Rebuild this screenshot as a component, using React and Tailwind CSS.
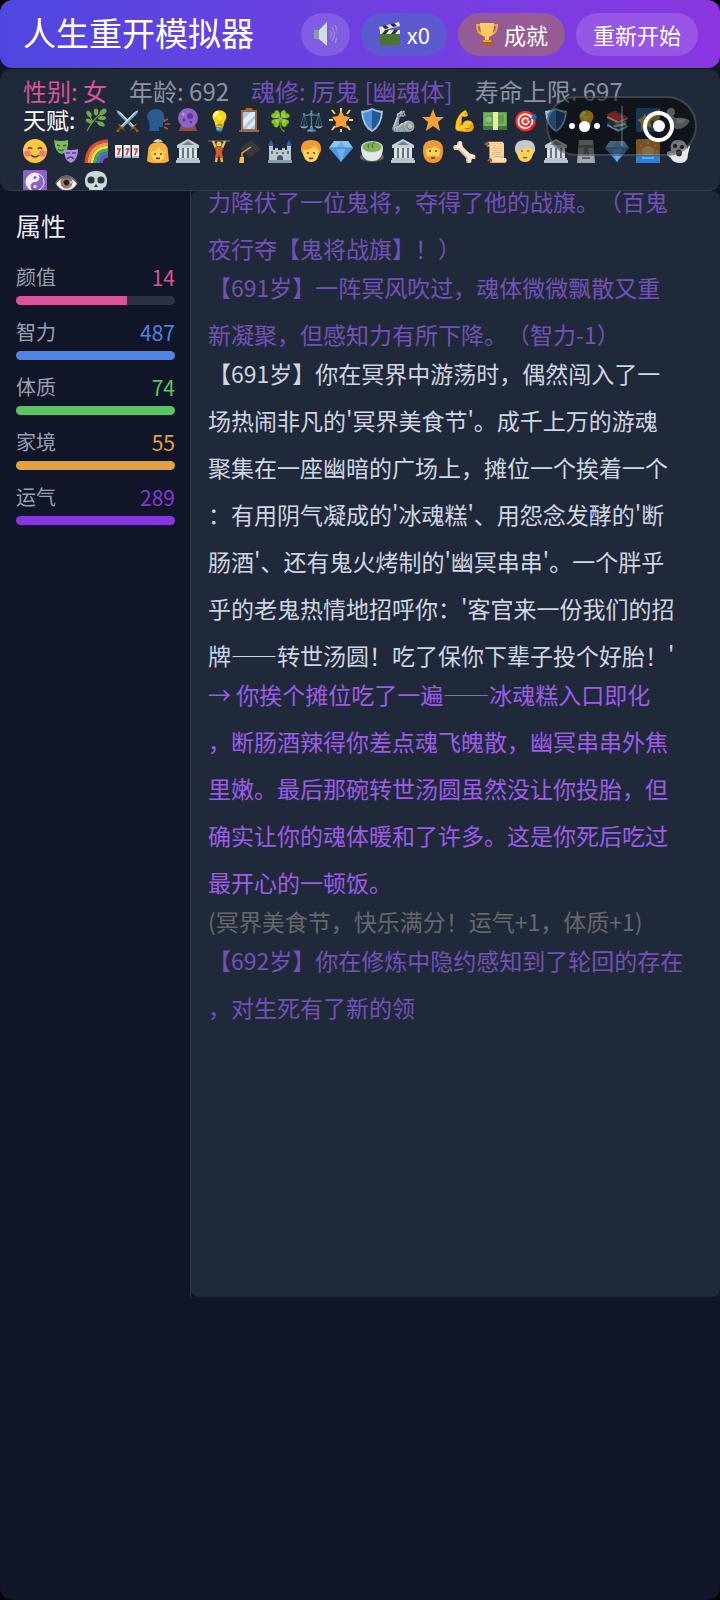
import { useState } from 'react';

// Small 24x24 drawings, used where the emoji font looks too different
const icons = {
  speaker: (
    <>
      <path d="M1 8h5v9H1z" fill="#8d9aa5" />
      <path d="M6 8l8-8v24l-8-7z" fill="#d3dce2" />
      <path d="M17 8q3 4 0 8M19 5q5 7 0 14M22 3q5 9 0 18" fill="none" stroke="#9b93c8" strokeWidth="1.2" />
    </>
  ),
  clapper: (
    <>
      <rect x="2" y="12" width="20" height="11" rx="1.5" fill="#4c7432" />
      <path d="M2 8h20v4H2z" fill="#e4e8ea" />
      <path d="M1 5l20-5 1 4L2 9z" fill="#e4e8ea" />
      <path d="M4 4l3 3 4-1-3-3zM12 2l3 3 4-1-3-3zM4 12l3-4h4l-3 4zM13 12l3-4h4l-3 4z" fill="#263238" />
    </>
  ),
  trophy: (
    <>
      <path d="M6 3H2q0 9 7 10M18 3h4q0 9-7 10" fill="none" stroke="#f5a93c" strokeWidth="2" />
      <path d="M5 1h14q0 13-5 14v5h-4v-5Q5 14 5 1z" fill="#fccb5c" />
      <path d="M6 20h12v3H6z" fill="#a9622f" />
      <path d="M8 18h8v2H8z" fill="#f09a35" />
    </>
  ),
  herb: (
    <>
      <path d="M3 23Q9 11 19 4M9 14Q6 10 6 6M11 13q5 2 8 1" fill="none" stroke="#6a9a45" strokeWidth="1.3" />
      <g fill="#6fa84c">
        <ellipse cx="19" cy="4" rx="4" ry="2.5" transform="rotate(-40 19 4)" />
        <ellipse cx="12" cy="4" rx="2.2" ry="3.4" />
        <ellipse cx="5" cy="6" rx="2.2" ry="3.4" transform="rotate(-30 5 6)" />
        <ellipse cx="5" cy="13" rx="2" ry="3.5" transform="rotate(-60 5 13)" />
        <ellipse cx="18" cy="10" rx="4" ry="2.1" />
        <ellipse cx="17" cy="16" rx="4" ry="2" transform="rotate(25 17 16)" />
      </g>
    </>
  ),
  speaking: (
    <>
      <path d="M1 9q1-8 9-8t8 8l1 5h-2v5h-4v4H3q2-5-2-14z" fill="#2b5b8e" />
      <path d="M18 13l4-2M19 16h5M18 19l4 2" stroke="#b5563f" strokeWidth="1.6" />
    </>
  ),
  crystal: (
    <>
      <path d="M5 17h14l2 6H3z" fill="#8d4f42" />
      <circle cx="12" cy="10" r="10" fill="#8e63c4" />
      <circle cx="14" cy="8" r="3" fill="#5d3a98" />
      <circle cx="8" cy="12" r="1.5" fill="#5d3a98" />
      <circle cx="15" cy="14" r="1.2" fill="#5d3a98" />
      <circle cx="7" cy="6" r="1.5" fill="#b695df" />
    </>
  ),
  mirror: (
    <>
      <path d="M9 0h6l1 2H8zM4 2h16v20h2v2H2v-2h2z" fill="#a9653a" />
      <rect x="6" y="4" width="12" height="17" fill="#a9c9e6" />
      <path d="M6 12l8-8h4v3L6 19zM9 21l9-10v5l-5 5z" fill="#dcecf8" />
    </>
  ),
  sparkle: (
    <>
      <path d="M12 0v4M3 2l3 4M21 2l-3 4M0 12h4M24 12h-4M3 22l3-4M21 22l-3-4M12 24v-3" stroke="#f9d36a" strokeWidth="2" />
      <path d="M12 2l3 6 6 1-4 5 1 6-6-2-6 2 1-6-4-5 6-1z" fill="#f5a036" />
    </>
  ),
  star: <path d="M12 1l3 8h8l-6 5 2 9-7-5-7 5 2-9-6-5h8z" fill="#f5a036" />,
  shield: (
    <>
      <path d="M12 0q5 3 11 3-1 16-11 21Q2 19 1 3q6 0 11-3z" fill="#a8c6dc" />
      <path d="M12 2Q8 4 3 5q1 12 9 17z" fill="#4c8fd8" />
      <path d="M12 2q4 2 9 3-1 12-9 17z" fill="#24588f" />
    </>
  ),
  cash: (
    <>
      <path d="M0 4h24v18H0z" fill="#5f9e4c" />
      <path d="M0 18h24v4H0z" fill="#3f7a3a" />
      <path d="M2 6h20v11H2z" fill="none" stroke="#8fc47b" />
      <circle cx="6" cy="11.5" r="3" fill="#8fc47b" />
      <path d="M10 4h5v18h-5z" fill="#f2e6a4" />
    </>
  ),
  comet: (
    <>
      <rect width="24" height="24" rx="2" fill="#2f6ea8" />
      <path d="M24 1L11 6l7 8 6-4z" fill="#e0a043" />
      <path d="M9 5l2 5 6 0-3 4 2 6-6-2-5 4V15l-4-3 5-2z" fill="#f8c04e" />
    </>
  ),
  dove: (
    <>
      <circle cx="5" cy="4" r="4" fill="#b4babd" />
      <path d="M1 5q6 1 8 5 8-1 12 1l3 2q-5 8-12 8Q3 21 1 5z" fill="#a6adb0" />
      <path d="M11 11h9l-3 4h-6z" fill="#cdd2d4" />
    </>
  ),
  smile: (
    <>
      <circle cx="12" cy="12" r="12" fill="#fbc73f" />
      <circle cx="4.5" cy="14.5" r="3.2" fill="#f2767c" />
      <circle cx="19.5" cy="14.5" r="3.2" fill="#f2767c" />
      <path d="M5 10q2-3 4 0M15 10q2-3 4 0M8 16q4 4 8 0" fill="none" stroke="#5c3a26" strokeWidth="1.6" />
    </>
  ),
  masks: (
    <>
      <path d="M0 1q6 2 14 0 1 12-6 14Q1 14 0 1z" fill="#7dbb62" />
      <path d="M3 6l3 1M9 7l3-1M4 10q3 3 7 0" stroke="#35682b" strokeWidth="1.4" fill="none" />
      <path d="M10 10q7 2 14 0 0 11-7 14-7-2-7-14z" fill="#ab90dd" />
      <path d="M12 14h4M18 14h4M13 20q4-4 7 0" stroke="#5a3c94" strokeWidth="1.4" fill="none" />
    </>
  ),
  rainbow: (
    <g fill="none" strokeWidth="3">
      <path d="M2 24Q3 3 24 2" stroke="#d84a3c" />
      <path d="M5 24Q6 6 24 5" stroke="#f0a23a" />
      <path d="M8 24Q9 9 24 8" stroke="#f5d64c" />
      <path d="M11 24q1-12 13-13" stroke="#4fa35a" />
      <path d="M14 24q1-9 10-10" stroke="#3c7fd0" />
      <path d="M17 24q1-6 7-7" stroke="#7652b0" />
    </g>
  ),
  slots: (
    <>
      <path d="M0 6h7v13H0zM8.500 6h7v13h-7zM17 6h7v13h-7z" fill="#e9edf2" />
      <path d="M0 17h7v2H0zM8.500 17h7v2h-7zM17 17h7v2h-7z" fill="#a9b4c6" />
      <path d="M2 10h3l-2 6M10.500 10h3l-2 6M19 10h3l-2 6" fill="none" stroke="#d1342f" strokeWidth="1.5" />
    </>
  ),
  princess: (
    <>
      <path d="M2 13Q2 3 12 3t10 10l1 9q-5 3-11 2-6 1-11-2z" fill="#f5b13e" />
      <path d="M7 3l2-2 3-1 3 1 2 2z" fill="#c5d3dc" />
      <path d="M5 13q6-1 8-5 1 4 6 5 0 9-7 9t-7-9z" fill="#fcd65c" />
      <path d="M9 14v2M15 14v2M10 19q2 1 4 0" stroke="#6a402a" strokeWidth="1.5" fill="none" />
    </>
  ),
  bank: (
    <>
      <path d="M12 0l11 6v3H1V6z" fill="#c3ced6" />
      <path d="M12 2l6 4H6z" fill="#75858f" />
      <path d="M3 9h18v10H3z" fill="#65747e" />
      <path d="M3 9h3v10H3zM8 9h3v10H8zM13 9h3v10h-3zM18 9h3v10h-3z" fill="#d9e1e6" />
      <path d="M1 19h22v2h1v3H0v-3h1z" fill="#b7c4cd" />
    </>
  ),
  lifter: (
    <>
      <path d="M1 2h22" stroke="#59656d" strokeWidth="1.5" />
      <path d="M6 2l3 7M18 2l-3 7M10 17l-1 6M14 17l1 6" stroke="#f6bd45" strokeWidth="2.4" />
      <circle cx="12" cy="5" r="2.600" fill="#f8c64f" />
      <path d="M8 8h8l-1 6 1 5h-3l-1-3-1 3H8l1-5z" fill="#d9582f" />
    </>
  ),
  cap: (
    <>
      <path d="M14 1l10 9-11 9L3 9z" fill="#363a3f" />
      <path d="M6 12l7 7 7-6v6q-5 5-12 1z" fill="#26292d" />
      <path d="M14 8L5 14v7" fill="none" stroke="#e7a235" strokeWidth="1.5" />
      <path d="M3 18h4v6H2z" fill="#f1bb50" />
    </>
  ),
  castle: (
    <>
      <path d="M1 7h4v4h2V9h3v2h4V9h3v2h2V7h4v16H1z" fill="#b9c7d4" />
      <path d="M0 7l3-6 3 6zM18 7l3-6 3 6z" fill="#2f63a8" />
      <path d="M9 23v-5q3-4 6 0v5z" fill="#495866" />
      <path d="M3 12h2v3H3zM19 12h2v3h-2zM8 13h2v2H8zM14 13h2v2h-2z" fill="#5d7286" />
      <path d="M0 21h24v3H0z" fill="#8b9bab" />
    </>
  ),
  man: (
    <>
      <path d="M2 12Q1 1 12 1t10 11l-3 5H5z" fill="#f09b34" />
      <path d="M4 11q9 0 12-5 1 4 4 5 0 12-8 12T4 11z" fill="#fcd25a" />
      <path d="M9 13v2M15 13v2M10 19q2 1 4 0" stroke="#6a402a" strokeWidth="1.5" fill="none" />
    </>
  ),
  gem: (
    <>
      <path d="M5 2h14l5 7-12 14L0 9z" fill="#4b97df" />
      <path d="M5 2h14l5 7H0z" fill="#8cc4f0" />
      <path d="M7 9l5-7 5 7-5 14z" fill="#6bb0ea" />
      <path d="M0 9h24" stroke="#397fc7" />
    </>
  ),
  bowl: (
    <>
      <ellipse cx="12" cy="18" rx="12" ry="5" fill="#56616b" />
      <path d="M1 8h22q0 14-11 14T1 8z" fill="#e3e8e9" />
      <ellipse cx="12" cy="8" rx="11" ry="6" fill="#cfdad2" />
      <ellipse cx="12" cy="8" rx="9.500" ry="5" fill="#83ad57" />
      <path d="M9 9q-2-2 0-4M13 9q-2-3 1-6" stroke="#49793a" strokeWidth="1.3" fill="none" />
    </>
  ),
  beard: (
    <>
      <path d="M2 11Q2 1 12 1t10 10q0 13-10 13T2 11z" fill="#ee9a35" />
      <path d="M5 10q7 0 9-3 2 3 5 3 0 7-2 8-5-3-10 0-2-1-2-8z" fill="#fcd25a" />
      <path d="M9 11v2M15 11v2M10 19h4" stroke="#6a402a" strokeWidth="1.5" />
    </>
  ),
  elder: (
    <>
      <path d="M2 12Q1 1 12 1t10 11l-3 5H5z" fill="#c4c9cc" />
      <path d="M4 11q9-1 12-4 1 3 4 4 0 12-8 12T4 11z" fill="#fcd25a" />
      <path d="M8 12h2M14 12h2M10 19q2-1 4 0" stroke="#80684a" strokeWidth="1.5" fill="none" />
    </>
  ),
  moai: (
    <>
      <path d="M5 1h14l1 11 1 12H3l1-12z" fill="#a1a8ab" />
      <path d="M5 6h14v3h-5l1 7H9l1-7H5z" fill="#6d7679" />
      <path d="M8 19h8" stroke="#555d60" strokeWidth="2" />
    </>
  ),
  sunrise: (
    <>
      <rect width="24" height="24" rx="2" fill="#f0a341" />
      <path d="M12 2v3M4 6l2 2M20 6l-2 2M2 13h3M19 13h3" stroke="#fbd98a" strokeWidth="1.6" />
      <circle cx="12" cy="13" r="6" fill="#fbe08c" />
      <path d="M0 16h24v6q0 2-2 2H2q-2 0-2-2z" fill="#2f7fd0" />
      <path d="M6 19h12" stroke="#77b7ec" strokeWidth="1.5" />
    </>
  ),
  ghost: (
    <>
      <path d="M5 12Q3 1 12 1t9 9l2-4 1 1-2 8q0 8-6 9-10 0-11-5l-4-3v-3l3-1z" fill="#e6eaec" />
      <circle cx="9" cy="7" r="2" fill="#2f3437" />
      <circle cx="16" cy="8" r="2" fill="#2f3437" />
      <ellipse cx="13" cy="14" rx="3" ry="3.500" fill="#2f3437" />
    </>
  ),
  yinyang: (
    <>
      <rect width="24" height="24" rx="2" fill="#8a63c9" />
      <circle cx="12" cy="12" r="9" fill="#f1eef8" />
      <path d="M12 3a9 9 0 010 18 4.500 4.500 0 010-9 4.500 4.500 0 000-9z" fill="#8a63c9" />
      <circle cx="12" cy="7.500" r="1.500" fill="#8a63c9" />
      <circle cx="12" cy="16.500" r="1.500" fill="#f1eef8" />
      <circle cx="12" cy="12" r="9" fill="none" stroke="#f1eef8" />
    </>
  ),
  skull: (
    <>
      <path d="M1 11Q1 1 12 1t11 10q0 6-4 7l-1 6H6l-1-6q-4-1-4-7z" fill="#cfd8dc" />
      <circle cx="7" cy="10" r="3.600" fill="#2c3336" />
      <circle cx="17" cy="10" r="3.600" fill="#2c3336" />
      <path d="M12 14l2 3h-4z" fill="#2c3336" />
    </>
  ),
};

const talents = [
  'herb', '⚔️', 'speaking', 'crystal', '💡', 'mirror', '🍀', '⚖️', 'sparkle', 'shield',
  '🦾', 'star', '💪', 'cash', '🎯', 'shield', '💡', '📚', 'comet', 'dove',
  'smile', 'masks', 'rainbow', 'slots', 'princess', 'bank', 'lifter', 'cap', 'castle', 'man', 'gem',
  'bowl', 'bank', 'beard', '🦴', '📜', 'elder', 'bank', 'moai', 'gem', 'sunrise', 'ghost',
  'yinyang', '👁️', 'skull',
];

const stats = [
  { label: '颜值', value: 14, text: 'text-[#d9549a]', bar: 'bg-[#d9549a]' },
  { label: '智力', value: 487, text: 'text-[#4f83e8]', bar: 'bg-[#4f83e8]' },
  { label: '体质', value: 74, text: 'text-[#5dc266]', bar: 'bg-[#5dc266]' },
  { label: '家境', value: 55, text: 'text-[#e6a03c]', bar: 'bg-[#e6a03c]' },
  { label: '运气', value: 289, text: 'text-[#8638dd]', bar: 'bg-[#8638dd]' },
];

const logs = [
  {
    tone: 'text-[#7351b8]',
    text: '力降伏了一位鬼将，夺得了他的战旗。（百鬼\n夜行夺【鬼将战旗】！）',
  },
  {
    tone: 'text-[#7351b8]',
    text: '【691岁】一阵冥风吹过，魂体微微飘散又重\n新凝聚，但感知力有所下降。（智力-1）',
  },
  {
    tone: 'text-[#cfd6e2]',
    text: "【691岁】你在冥界中游荡时，偶然闯入了一\n场热闹非凡的'冥界美食节'。成千上万的游魂\n聚集在一座幽暗的广场上，摊位一个挨着一个\n：有用阴气凝成的'冰魂糕'、用怨念发酵的'断\n肠酒'、还有鬼火烤制的'幽冥串串'。一个胖乎\n乎的老鬼热情地招呼你：'客官来一份我们的招\n牌——转世汤圆！吃了保你下辈子投个好胎！'",
  },
  {
    tone: 'text-[#9c5ce8]',
    text: '→ 你挨个摊位吃了一遍——冰魂糕入口即化\n，断肠酒辣得你差点魂飞魄散，幽冥串串外焦\n里嫩。最后那碗转世汤圆虽然没让你投胎，但\n确实让你的魂体暖和了许多。这是你死后吃过\n最开心的一顿饭。',
  },
  {
    tone: 'text-[#66686c]',
    text: '(冥界美食节，快乐满分！运气+1，体质+1)',
  },
  {
    tone: 'text-[#7351b8]',
    text: '【692岁】你在修炼中隐约感知到了轮回的存在\n，对生死有了新的领',
  },
];

function Icon({ name }) {
  return (
    <svg viewBox="0 0 24 24" className="size-6 shrink-0" aria-hidden="true">
      {icons[name]}
    </svg>
  );
}

function StatBar({ label, value, text, bar }) {
  const percent = Math.min(100, value * 5);

  return (
    <div className="flex flex-col gap-1">
      <div className="flex justify-between leading-[30px]">
        <span className="text-[20px] text-[#9aa1b0]">{label}</span>
        <span className={`text-[21px] ${text}`}>{value}</span>
      </div>
      <div className="h-[9px] overflow-hidden rounded-full bg-[#2d3240]">
        <div className={`h-full ${bar}`} style={{ width: `${percent}%` }} />
      </div>
    </div>
  );
}

export default function App() {
  const [muted, setMuted] = useState(false);

  return (
    <div lang="zh-CN" className="bg-black font-['Noto_Sans_CJK_SC',sans-serif] [text-spacing-trim:space-all]">
      <div className="relative flex min-h-screen flex-col overflow-hidden rounded-xl bg-[#101527]">
        <header className="flex h-[68px] items-center justify-between rounded-xl bg-linear-to-r from-[#4f46e0] to-[#8a36e0] pr-[22px] pl-[23px] text-white">
          <h1 className="mb-1 text-[33px] leading-10">人生重开模拟器</h1>
          <div className="flex gap-[11px] text-[22px] leading-[43px]">
            <button
              aria-label="声音"
              aria-pressed={!muted}
              onClick={() => setMuted(!muted)}
              className="flex w-[49px] items-center justify-center rounded-full bg-white/15"
            >
              <Icon name="speaker" />
            </button>
            <button className="flex items-center gap-[5px] rounded-full bg-[#3b82b6]/40 px-[17px]">
              <Icon name="clapper" />
              x0
            </button>
            <button className="flex items-center gap-[5px] rounded-full bg-[#b58238]/45 px-[17px]">
              <Icon name="trophy" />
              成就
            </button>
            <button className="rounded-full bg-white/15 px-[17px]">重新开始</button>
          </div>
        </header>

        <section className="mt-px h-[122px] overflow-hidden rounded-xl border-b border-[#343b4b] bg-[#202939] px-[23px] pt-[9px] text-[24px]">
          <div className="flex gap-[22px] leading-[26px]">
            <span className="text-[#d9549a]">性别: 女</span>
            <span className="text-[#8b93a3]">年龄: 692</span>
            <span className="text-[#7351b8]">魂修: 厉鬼 [幽魂体]</span>
            <span className="text-[#8b93a3]">寿命上限: 697</span>
          </div>
          <div className="grid auto-rows-[31px] grid-cols-[repeat(22,minmax(0,1fr))] items-center">
            <span className="col-span-2 text-[23px] leading-[31px] whitespace-nowrap text-white">天赋:</span>
            {talents.map((talent, i) =>
              icons[talent] ? (
                <Icon key={i} name={talent} />
              ) : (
                <span key={i} className="w-6 text-[20px] leading-[31px]">
                  {talent}
                </span>
              )
            )}
          </div>
        </section>

        {/* Floating mini program capsule */}
        <div className="absolute top-24 right-[23px] flex h-[60px] w-[151px] rounded-full border-2 border-white/20 bg-black/50">
          <button aria-label="更多" className="flex flex-1 items-center justify-center gap-1">
            <span className="size-[6px] rounded-full bg-white" />
            <span className="size-[11px] rounded-full bg-white" />
            <span className="size-[6px] rounded-full bg-white" />
          </button>
          <span className="my-2 w-0.5 bg-white/20" />
          <button aria-label="关闭" className="flex flex-1 items-center justify-center">
            <span className="flex size-[31px] items-center justify-center rounded-full border-4 border-white">
              <span className="size-3 rounded-full bg-white" />
            </span>
          </button>
        </div>

        <main className="flex min-h-0 flex-1">
          <aside className="w-[191px] shrink-0 border-r border-[#343b4b] pt-4 pr-[15px] pl-4">
            <h2 className="text-[25px] leading-9 text-[#e8ebf2]">属性</h2>
            <div className="mt-[19px] flex flex-col gap-3">
              {stats.map((stat) => (
                <StatBar key={stat.label} {...stat} />
              ))}
            </div>
          </aside>

          <div className="flex-1 overflow-hidden rounded-lg bg-[#202939] px-[17px] text-[23px] leading-[47px]">
            <div className="-mt-[13px]">
              {logs.map((log) => (
                <p key={log.text} className={`-mt-2 whitespace-pre-line first:mt-0 ${log.tone}`}>
                  {log.text}
                </p>
              ))}
            </div>
          </div>
        </main>
        <div className="h-[303px]" />
      </div>
    </div>
  );
}
